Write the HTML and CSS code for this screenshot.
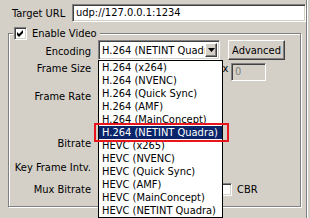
FILE: index.html
```html
<!DOCTYPE html>
<html>
<head>
<meta charset="utf-8">
<link rel="stylesheet" href="styles.css">
</head>
<body>
<div class="panel">
  <div class="url-row">
    <span class="url-label">Target URL</span>
    <div class="field sunken url-field">udp://127.0.0.1:1234</div>
  </div>
  <fieldset class="group">
    <legend class="legend"><span class="check sunken"><svg width="9" height="9" viewBox="0 0 9 9"><polygon points="1,3 3,5 7,1 7,4 3,8 1,6" fill="#000"/></svg></span><span>Enable Video</span></legend>
    <div class="row row-enc">
      <span class="lbl">Encoding</span>
      <div class="combo sunken">
        <span class="combo-text">H.264 (NETINT Quadra)</span>
        <span class="combo-btn raised"><svg width="7" height="4" viewBox="0 0 7 4"><polygon points="0,0 7,0 3.5,4" fill="#000"/></svg></span>
      </div>
      <span class="btn raised">Advanced</span>
    </div>
    <div class="row row-size">
      <span class="lbl">Frame Size</span>
      <div class="field sunken w-field"></div>
      <span class="times">x</span>
      <div class="field sunken disabled h-field">0</div>
    </div>
    <div class="row row-rate">
      <span class="lbl">Frame Rate</span>
    </div>
    <div class="row row-bitrate">
      <span class="lbl">Bitrate</span>
    </div>
    <div class="row row-key">
      <span class="lbl">Key Frame Intv.</span>
    </div>
    <div class="row row-mux">
      <span class="lbl">Mux Bitrate</span>
      <div class="field sunken mux-field"></div>
      <span class="check sunken"></span>
      <span class="cbr">CBR</span>
    </div>
  </fieldset>
  <ul class="dropdown">
    <li class="item">H.264 (x264)</li>
    <li class="item">H.264 (NVENC)</li>
    <li class="item">H.264 (Quick Sync)</li>
    <li class="item">H.264 (AMF)</li>
    <li class="item">H.264 (MainConcept)</li>
    <li class="item sel">H.264 (NETINT Quadra)</li>
    <li class="item">HEVC (x265)</li>
    <li class="item">HEVC (NVENC)</li>
    <li class="item">HEVC (Quick Sync)</li>
    <li class="item">HEVC (AMF)</li>
    <li class="item">HEVC (MainConcept)</li>
    <li class="item">HEVC (NETINT Quadra)</li>
  </ul>
  <div class="annot"></div>
</div>
</body>
</html>
```
FILE: styles.css
```css
* { box-sizing: border-box; }
html, body { margin: 0; padding: 0; }
body {
  background: #d4d0c8;
  font-family: "DejaVu Sans Condensed", "DejaVu Sans", "Liberation Sans", sans-serif;
  font-stretch: semi-condensed;
  font-size: 11px;
  line-height: 13px;
  color: #000;
  width: 310px;
  height: 218px;
  overflow: hidden;
}
.panel {
  position: relative;
  width: 307px;
  height: 218px;
  padding-top: 4px;
  border-right: 1px solid #808080;
  box-shadow: 1px 0 0 #fff;
}
.sunken {
  border: 1px solid;
  border-color: #808080 #fff #fff #808080;
  box-shadow: inset 1px 1px 0 #404040, inset -1px -1px 0 #d4d0c8;
  background: #fff;
}
.raised {
  border: 1px solid;
  border-color: #fff #404040 #404040 #fff;
  box-shadow: inset -1px -1px 0 #808080, inset 1px 1px 0 #d4d0c8;
  background: #d4d0c8;
}
.url-row { display: flex; align-items: center; padding-left: 12px; height: 18px; }
.url-label { width: 60px; flex: none; }
.field { height: 18px; padding: 1px 3px 0; white-space: nowrap; overflow: hidden; }
.url-field { flex: 1; padding-left: 3px; }
.group {
  margin: 5px 0 0 8px;
  padding: 0 0 10px 0;
  width: 293px;
  min-width: 0;
  border: 1px solid #808080;
  box-shadow: 1px 1px 0 #fff, inset 1px 1px 0 #fff;
}
.legend {
  margin-left: 4px;
  padding: 0 3px 0 1px;
  display: flex;
  align-items: center;
  gap: 5px;
  background: #d4d0c8;
  height: 13px;
}
.check {
  width: 13px; height: 13px; flex: none;
  display: flex; align-items: center; justify-content: center;
}
.row { display: flex; align-items: center; height: 13px; }
.lbl { width: 82px; margin-right: 7px; text-align: right; flex: none; white-space: nowrap; }
.row-enc { height: 22px; align-items: flex-start; }
.row-enc .lbl { margin-top: 5px; }
.row-rate { margin-top: 15px; }
.row-bitrate { margin-top: 34px; }
.row-key { margin-top: 11px; }
.row-mux { margin-top: 9px; }
.combo {
  width: 122px; height: 20px; flex: none;
  display: flex; align-items: center;
  padding: 2px 2px 2px 3px;
}
.combo-text { flex: 1; overflow: hidden; white-space: nowrap; padding-top: 1px; }
.combo-btn {
  width: 12px; height: 14px; flex: none;
  display: flex; align-items: center; justify-content: center;
}
.btn {
  margin-left: 8px; width: 57px; height: 20px; flex: none;
  display: flex; align-items: center; justify-content: center;
}
.w-field { width: 122px; flex: none; }
.times { width: 11px; text-align: center; flex: none; }
.h-field { width: 35px; flex: none; align-self: flex-start; margin-top: 1px; }
.disabled { background: #d4d0c8; color: #808080; }
.mux-field { width: 116px; flex: none; margin-right: 5px; }
.cbr { margin-left: 5px; }
.dropdown {
  position: absolute;
  left: 98px; top: 60px;
  width: 125px;
  margin: 0; padding: 0;
  list-style: none;
  background: #fff;
  border: 1px solid #000;
}
.item { height: 13px; padding-left: 3px; white-space: nowrap; }
.item.sel { background: #0a246a; color: #fff; }
.annot {
  position: absolute;
  left: 94px; top: 123px;
  width: 135px; height: 19px;
  border: 2px solid #e8161c;
}
```
